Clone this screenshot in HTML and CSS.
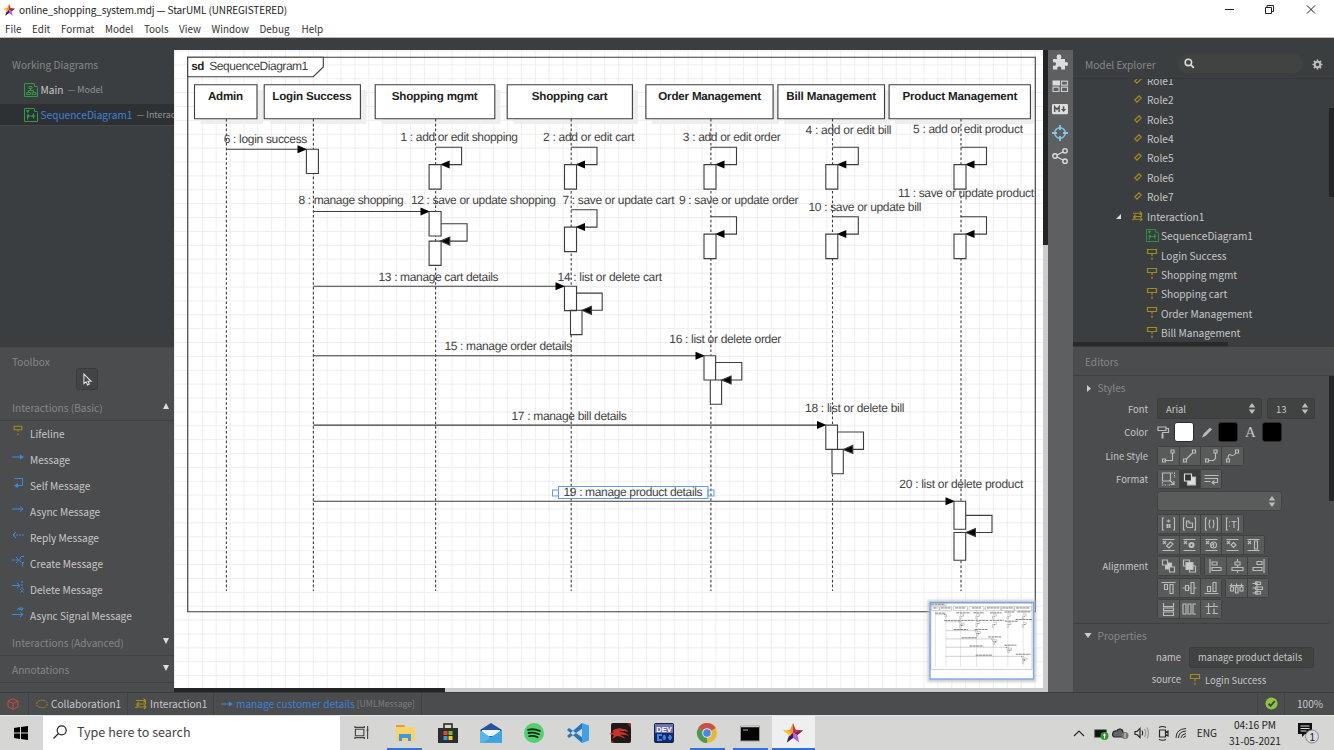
FILE: index.html
```html
<!DOCTYPE html>
<html lang="en">
<head>
<meta charset="utf-8">
<title>online_shopping_system.mdj — StarUML (UNREGISTERED)</title>
<link rel="stylesheet" href="styles.css">
</head>
<body>
<svg class="defs" width="0" height="0" aria-hidden="true">
  <symbol id="star" viewBox="0 0 20 20"><path d="M10 0 7.3 6.8 0 7.3 5.6 12 3.8 19.4 10 15Z" fill="#f6c143"/><path d="M10 0v15L7 9 5 7.3l2.3-.5Z" fill="#f3962f"/><path d="M10 0l2.7 6.800 7.300.5-5.600 4.700L10 10Z" fill="#c33350"/><path d="M14.400 12 20 7.300l-8 2.700Z" fill="#6b2745"/><path d="M10 15l6.200 4.400L14.400 12 10 10Z" fill="#b05fe0"/><path d="M10 10 5.600 14 3.800 19.400 10 15Z" fill="#2b1d66"/></symbol>
  <symbol id="lifeline" viewBox="0 0 12 14"><path d="M1.500 1.500h9v4h-9zM6 5.500V8M6 9.500v2.500" fill="none" stroke="#a48a1c" stroke-width="1.200"/></symbol>
  <symbol id="msg" viewBox="0 0 12 12"><path d="M0 6h10" stroke="#3a8ae0"/><path d="M8 3.500 12 6 8 8.500z" fill="#3a8ae0"/></symbol>
  <symbol id="self" viewBox="0 0 12 12"><path d="M2.500 1.500h8v7H5" fill="none" stroke="#3a8ae0"/><path d="M6 6 2 8.500 6 11z" fill="#3a8ae0"/></symbol>
  <symbol id="async" viewBox="0 0 12 12"><path d="M0 6h11M8 3.500 11 6 8 8.500" fill="none" stroke="#3a8ae0"/></symbol>
  <symbol id="reply" viewBox="0 0 12 12"><path d="M4 3 1 6l3 3" fill="none" stroke="#3a8ae0"/><path d="M1 6h11" stroke="#3a8ae0" stroke-dasharray="2 1"/></symbol>
  <symbol id="create" viewBox="0 0 12 12"><path d="M0 5h7M4 2l3 3-3 3M12 1.500H9L7.500 5 9 7.500h3M10.500 8v4" fill="none" stroke="#3a8ae0" stroke-dasharray="3 .5"/></symbol>
  <symbol id="delete" viewBox="0 0 12 12"><path d="M0 4.500h8M5 2l3 2.500L5 7" fill="none" stroke="#3a8ae0"/><path d="M10 0v8M8 8l4 4m0-4-4 4" fill="none" stroke="#3a8ae0" stroke-dasharray="2 1"/></symbol>
  <symbol id="signal" viewBox="0 0 12 12"><path d="M0 7.500h11M8 5l3 2.500L8 10M5 3.500 7 1h4L9.500 3.500M7 2.500h4" fill="none" stroke="#3a8ae0"/></symbol>
  <symbol id="seq" viewBox="0 0 14 14"><path d="M10 .5H.5v13h13v-9M10.500.5v3h3M3.500 2v2m0 2.500v5M4 8h5M9.500 5.500v5" fill="none" stroke="#2f9a47"/><path d="M2 2h3.500L3.700 5.500zM5 6v4L2.500 8zM8.500 6.500v3L11.500 8z" fill="#2f9a47"/></symbol>
  <symbol id="cls" viewBox="0 0 14 14"><path d="M10 .5H.5v13h13v-9M10.500.5v3h3M5 3.500h3v2H5zM6.500 5.500v2M4.500 9.500v-2h5v2M2.500 9.500h4v2h-4zM8 9.500h4v2H8z" fill="none" stroke="#2f9a47"/></symbol>
  <symbol id="role" viewBox="0 0 8 8"><path d="M.8 5 5 .8 7.200 3 3 7.200Z" fill="none" stroke="#a48a1c" stroke-width="1.200"/></symbol>
  <symbol id="inter" viewBox="0 0 12 12"><path d="M1 2.500h9.500M8.500.5l2 2-2 2M10.500 3v3H2M4 4 2 6l2 2M2 6v3h9M9 7l2 2-2 2M0 9.500h2" fill="none" stroke="#a48a1c" stroke-width="1.100"/></symbol>
  <symbol id="fmt" viewBox="0 0 14 14"><path d="M2.500 1 1 1v12h1.500M11.500 1H13v12h-1.500" fill="none" stroke="currentColor"/></symbol>
  <symbol id="bars" viewBox="0 0 14 14"><path d="M1 1.500h12M1 12.500h12M1.500 3l3 3m0-3-3 3" fill="none" stroke="currentColor"/></symbol>
  <symbol id="updown" viewBox="0 0 8 12"><path d="M.5 5 4 0l3.500 5zM.5 7 4 12l3.500-5z" fill="#bcbcbc"/></symbol>
</svg>

<header class="titlebar">
  <svg class="app-icon"><use href="#star"/></svg>
  <h1>online_shopping_system.mdj — StarUML (UNREGISTERED)</h1>
  <svg class="window-controls" viewBox="0 0 92 12"><path d="M1 5.500h9M41.500 3.500h6v6h-6zM43 3V1.500h6.500v6H48M83 1.500l8 8m0-8-8 8" fill="none" stroke="#222"/></svg>
</header>
<nav class="menubar"><span>File</span><span>Edit</span><span>Format</span><span>Model</span><span>Tools</span><span>View</span><span>Window</span><span>Debug</span><span>Help</span></nav>

<main class="workspace">
  <aside class="left">
    <section class="working">
      <h2>Working Diagrams</h2>
      <div class="doc"><svg><use href="#cls"/></svg><b>Main</b><small>— Model</small></div>
      <div class="doc selected"><svg><use href="#seq"/></svg><b>SequenceDiagram1</b><small>— Interaction1</small></div>
    </section>
    <section class="toolbox">
      <h2>Toolbox</h2>
      <div class="pointer"><svg viewBox="0 0 10 14"><path d="M1 1v10.500l2.500-2L5 13l2-1-1.500-3H9z" fill="none" stroke="#ddd" stroke-width="1.200"/></svg></div>
      <h3 class="basic">Interactions (Basic)<i class="tri up"></i></h3>
      <ul>
        <li><svg><use href="#lifeline"/></svg>Lifeline</li>
        <li><svg><use href="#msg"/></svg>Message</li>
        <li><svg><use href="#self"/></svg>Self Message</li>
        <li><svg><use href="#async"/></svg>Async Message</li>
        <li><svg><use href="#reply"/></svg>Reply Message</li>
        <li><svg><use href="#create"/></svg>Create Message</li>
        <li><svg><use href="#delete"/></svg>Delete Message</li>
        <li><svg><use href="#signal"/></svg>Async Signal Message</li>
      </ul>
      <h3>Interactions (Advanced)<i class="tri down"></i></h3>
      <h3>Annotations<i class="tri down"></i></h3>
    </section>
  </aside>

  <section class="canvas-area">
    <div class="canvas">
      <svg viewBox="174 50 869 638" width="869" height="638">
        <defs>
          <pattern id="grid" x="187.900" y="50.500" width="13.880" height="13.880" patternUnits="userSpaceOnUse"><path d="M0 .5H13.880M.5 0V13.880" stroke="#eee" fill="none"/></pattern>
          <g id="loop"><path d="M0 0H26V17.300H12" fill="none"/><path d="M4.500 17.300l9.500-4v8z" fill="#000" stroke="none"/><path d="M-6.500 17.300h12v24.500h-12z"/></g>
          <g id="loop2"><path d="M-6.500-12.300h12v24.500h-12z"/><path d="M5.500 0H31.500V17.300H12" fill="none"/></g>
          <path id="head" d="M0 0l-9.500-4v8z" fill="#000" stroke="none"/>
        </defs>
        <rect x="174" y="50" width="869" height="638" fill="#fff"/>
        <rect x="174" y="50" width="869" height="638" fill="url(#grid)"/>
        <g id="shapes" class="shapes">
          <path d="M187.700 57.300H1035.300V611.700H187.700Z" fill="none"/>
          <path d="M187.700 57.300H323.300V67L313.300 76.700H187.700Z"/>
          <path class="shadow" d="M200.500 90h62.500v34h-62.500zM270.200 90h96.200v34h-96.200zM381.200 90H500.500v34H381.200zM513.500 90H638v34H513.500zM652 90H779v34H652zM784 90H890v34H784zM895 90H1034v34H895z"/>
          <path d="M194.500 84.700h62.500v34h-62.500zM264.200 84.700h96.200v34h-96.200zM375.200 84.700h119.600v34h-119.600zM507.200 84.700h125.200v34H507.200zM645.900 84.700h127.200v34H645.900zM777.900 84.700h106.600v34H777.900zM889.100 84.700h141.300v34H889.100z"/>
          <path class="dashed" d="M226.400 119V591M313.400 119V591M435.600 119V591M571.200 119V591M710.900 119V591M832.500 119V591M961 119V591"/>
          <path d="M306.400 149.200h12v24.300h-12z"/>
          <path d="M226.400 149.200H300M313.400 211.500H422M313.400 286.300H558M313.400 355.700H697M313.400 425.100H819M313.400 501.300H947"/>
          <use href="#head" x="307" y="149.200"/><use href="#head" x="430" y="211.500"/><use href="#head" x="565" y="286.300"/><use href="#head" x="705" y="355.700"/><use href="#head" x="826.500" y="425.100"/><use href="#head" x="955" y="501.300"/>
          <use href="#loop" x="435.600" y="147.300"/><use href="#loop" x="571" y="147.300"/><use href="#loop" x="710.500" y="147.300"/><use href="#loop" x="832.300" y="147.300"/><use href="#loop" x="960.500" y="147.300"/>
          <use href="#loop" x="571" y="209.800"/><use href="#loop" x="710.500" y="216.800"/><use href="#loop" x="832.300" y="216.800"/><use href="#loop" x="960.500" y="216.800"/>
          <use href="#loop2" x="435.600" y="223.800"/><path d="M429.100 241.100h12v24.300h-12z"/><path d="M440.300 241.100l9.500-4v8z" fill="#000"/>
          <path d="M564.500 286.300h12v24.300h-12zM570.500 310.300h11.500v24.300h-11.500z"/><path d="M582 310.300l9.500-4v8z" fill="#000"/>
          <path d="M576.500 293.100H602.200V310.300H590" fill="none"/>
          <path d="M704 355.700h11.600v24.300H704zM710.300 380h11.300v24.300h-11.300z"/><path d="M715.600 362.500H741.800V380H730" fill="none"/><path d="M721.600 380l9.500-4v8z" fill="#000"/>
          <path d="M825.800 425.100h11.700v24.300h-11.700zM832 449.400h11.300v24.300H832z"/><path d="M837.500 432H863.500V449.400H852" fill="none"/><path d="M843.300 449.400l9.500-4v8z" fill="#000"/>
          <path d="M954 501.300h11.700v28H954zM954 532.500h11.700v27.800H954z"/><path d="M965.700 515.400H992V532.500H975" fill="none"/><path d="M965.900 532.500l9.500-4v8z" fill="#000"/>
        </g>
        <g class="sel"><rect x="558.500" y="486.500" width="149.500" height="12"/><rect x="552.500" y="490" width="6" height="6"/><rect x="708" y="490" width="6" height="6"/></g>
        <g class="names">
          <text x="191.300" y="69.700" textLength="13">sd</text>
          <text x="208" y="99.700" textLength="35">Admin</text>
          <text x="272.300" y="99.700" textLength="79.500">Login Success</text>
          <text x="391.700" y="99.700" textLength="86">Shopping mgmt</text>
          <text x="531.700" y="99.700" textLength="76">Shopping cart</text>
          <text x="658.300" y="99.700" textLength="102.700">Order Management</text>
          <text x="786.300" y="99.700" textLength="89.700">Bill Management</text>
          <text x="902.500" y="99.700" textLength="114.800">Product Management</text>
        </g>
        <g class="labels">
          <text x="209.300" y="69.700" textLength="99">SequenceDiagram1</text>
          <text x="223.700" y="143.300" textLength="83.600">6 : login success</text>
          <text x="400.500" y="141.300" textLength="117.500">1 : add or edit shopping</text>
          <text x="543" y="141.300" textLength="91.300">2 : add or edit cart</text>
          <text x="682.800" y="141.300" textLength="98">3 : add or edit order</text>
          <text x="805.500" y="134.300" textLength="86">4 : add or edit bill</text>
          <text x="913" y="133" textLength="110">5 : add or edit product</text>
          <text x="298.500" y="203.700" textLength="105.300">8 : manage shopping</text>
          <text x="411" y="204.300" textLength="145">12 : save or update shopping</text>
          <text x="562.500" y="204.300" textLength="112">7 : save or update cart</text>
          <text x="679" y="204.300" textLength="119.600">9 : save or update order</text>
          <text x="898" y="196.700" textLength="136">11 : save or update product</text>
          <text x="808.500" y="211.300" textLength="113">10 : save or update bill</text>
          <text x="378.500" y="281" textLength="120">13 : manage cart details</text>
          <text x="557.500" y="281" textLength="104.500">14 : list or delete cart</text>
          <text x="669.300" y="342.500" textLength="112">16 : list or delete order</text>
          <text x="444.500" y="350.300" textLength="127.500">15 : manage order details</text>
          <text x="805" y="412" textLength="99.500">18 : list or delete bill</text>
          <text x="511.500" y="419.500" textLength="115.300">17 : manage bill details</text>
          <text x="563.500" y="496" textLength="139">19 : manage product details</text>
          <text x="899.300" y="488.300" textLength="124">20 : list or delete product</text>
        </g>
        <!-- overview map -->
        <rect class="map-glow" x="927.500" y="600" width="108.500" height="82"/>
        <rect class="map" x="930" y="602.500" width="103.500" height="76.500"/>
        <g class="map-view" transform="translate(908.500 596.500) scale(.1193)"><use href="#shapes"/>
          <path class="map-text" d="M191 65h117M208 96h35M272 96h80M392 96h86M532 96h76M658 96h103M786 96h90M902 96h115M224 139h83M400 137h118M543 137h91M683 137h98M806 130h86M913 129h110M298 200h106M411 200h145M562 200h112M679 200h120M898 193h136M808 207h113M378 277h120M557 277h105M669 339h112M444 346h128M805 408h100M511 415h116M563 492h139M899 484h124"/></g>
      </svg>
    </div>
    <div class="vscroll"><i></i></div>
    <div class="hscroll"><i></i></div>
  </section>

  <aside class="extensions">
    <svg viewBox="0 0 16 16"><path d="M1 5h4.300C3.800 2.500 5 .5 7 .5s3.200 2 1.700 4.500H13v3.500c2-1 3-.2 3 1.500s-1 2.500-3 1.500V15.500H9c.8-2 0-3-1.700-3s-2.500 1-1.800 3H1v-4c2 .6 3-.2 3-1.600S3 8 1 8.600z" fill="#ddd"/></svg>
    <svg viewBox="0 0 16 16"><path d="M.5 2.500H8v5H.5z" fill="#ddd"/><path d="M9.500 3.100h6v4h-6zM1 9.100h6v4.400H1zM9.500 9.100h6v4.400h-6z" fill="none" stroke="#ccc" stroke-width="1.200"/></svg>
    <svg viewBox="0 0 18 16"><rect y="2.500" width="18" height="11.500" rx="1.500" fill="#ddd"/><path d="M3 11.500V5.500l2.500 3 2.500-3v6M13 5v4" fill="none" stroke="#555" stroke-width="1.700"/><path d="M10 8h6l-3 3.500z" fill="#555"/></svg>
    <svg viewBox="0 0 16 16"><circle cx="8" cy="8" r="5.300" fill="none" stroke="#86c5ea" stroke-width="1.500"/><path d="M8 0v5M8 11v5M0 8h5M11 8h5" stroke="#86c5ea" stroke-width="1.800"/></svg>
    <svg viewBox="0 0 16 16"><path d="M3 8 13 3M3 8l10 5" stroke="#ddd" stroke-width="1.300"/><g fill="#5e5f61" stroke="#ddd" stroke-width="1.400"><circle cx="3" cy="8" r="2.200"/><circle cx="13" cy="2.800" r="2.200"/><circle cx="13" cy="13.200" r="2.200"/></g></svg>
  </aside>

  <aside class="right">
    <section class="explorer">
      <div class="explorer-head"><h2>Model Explorer</h2>
        <div class="search"><svg viewBox="0 0 12 12"><circle cx="4.800" cy="4.800" r="3.500" fill="none" stroke="#ddd" stroke-width="1.700"/><path d="M7.500 7.500l3.200 3.200" stroke="#ddd" stroke-width="2"/></svg></div>
        <svg class="gear" viewBox="0 0 12 12"><circle cx="6" cy="6" r="3" fill="none" stroke="#bbb" stroke-width="2.200"/><path d="M6 .5v2M6 9.500v2M.5 6h2M9.500 6h2M2.100 2.100l1.500 1.500M8.400 8.400l1.500 1.500M9.900 2.100 8.400 3.600M3.600 8.400 2.100 9.900" stroke="#bbb" stroke-width="1.800"/></svg>
      </div>
      <div class="tree">
        <div class="role"><svg><use href="#role"/></svg>Role1</div>
        <div class="role"><svg><use href="#role"/></svg>Role2</div>
        <div class="role"><svg><use href="#role"/></svg>Role3</div>
        <div class="role"><svg><use href="#role"/></svg>Role4</div>
        <div class="role"><svg><use href="#role"/></svg>Role5</div>
        <div class="role"><svg><use href="#role"/></svg>Role6</div>
        <div class="role"><svg><use href="#role"/></svg>Role7</div>
        <div class="interaction"><svg class="expander" viewBox="0 0 6 6"><path d="M6 0v6H0z" fill="#ddd"/></svg><svg class="ico"><use href="#inter"/></svg>Interaction1</div>
        <div class="leaf seq"><svg><use href="#seq"/></svg>SequenceDiagram1</div>
        <div class="leaf"><svg><use href="#lifeline"/></svg>Login Success</div>
        <div class="leaf"><svg><use href="#lifeline"/></svg>Shopping mgmt</div>
        <div class="leaf"><svg><use href="#lifeline"/></svg>Shopping cart</div>
        <div class="leaf"><svg><use href="#lifeline"/></svg>Order Management</div>
        <div class="leaf"><svg><use href="#lifeline"/></svg>Bill Management</div>
        <i class="tree-v"></i><i class="tree-h"></i>
      </div>
    </section>
    <section class="editors">
      <h2>Editors</h2>
      <div class="editor-body">
        <h3><svg viewBox="0 0 4 7"><path d="M0 0l4 3.500L0 7z" fill="#ccc"/></svg>Styles</h3>
        <div class="field"><label>Font</label><div class="select font">Arial<svg><use href="#updown"/></svg></div><div class="select size">13<svg><use href="#updown"/></svg></div></div>
        <div class="field colors"><label>Color</label>
          <svg viewBox="0 0 12 14"><path d="M1 2h8v3.500H1zM9 3.500h2.500v4h-6V9" fill="none" stroke="#bbb" stroke-width="1.200"/><path d="M4.500 8.500h2v5h-2z" fill="#bbb"/></svg><i class="swatch white"></i>
          <svg viewBox="0 0 12 14"><path d="M1 12.500 2.500 9 9 2.500l2 2L4.500 11z" fill="#bbb"/></svg><i class="swatch"></i>
          <span class="letter">A</span><i class="swatch"></i></div>
        <div class="field"><label>Line Style</label><div class="group">
          <span><svg viewBox="0 0 14 14"><path d="M3 11.500h8V4M1 10h3v3H1zM9.500 1h3v3h-3z"/></svg></span><span><svg viewBox="0 0 14 14"><path d="M3.500 10.500l7-7M1 10h3v3H1zM10 1h3v3h-3z"/></svg></span><span><svg viewBox="0 0 14 14"><path d="M4 11.500h5l2-2V4M1 10h3v3H1zM9.500 1h3v3h-3z"/></svg></span><span><svg viewBox="0 0 14 14"><path d="M2.500 10c0-4 1-5 3-4s3 1 5-2M1 10h3v3H1zM10 1h3v3h-3z"/></svg></span></div></div>
        <div class="field"><label>Format</label><div class="group">
          <span><svg viewBox="0 0 14 14"><path d="M1 1h8v8H1z"/><path d="M10 1h3v5M1 10v3h5M7 13h2" stroke-dasharray="1.500 1"/><path d="M8 8l4 4M12.500 9v3.500H9"/></svg></span><span class="on"><svg viewBox="0 0 14 14"><path d="M5 5h8v8H5z" fill="#ddd"/><path d="M2 2h7v7H2z" fill="#333" stroke="#ddd"/></svg></span><span><svg viewBox="0 0 14 14"><path d="M0 3.500h14M0 6.500h13v4H8M0 9.500h6M10 8.500l-2.500 2 2.500 2"/></svg></span></div></div>
        <div class="field wide"><div class="select blank"><svg><use href="#updown"/></svg></div></div>
        <div class="field g1"><div class="group">
          <span><svg viewBox="0 0 14 14"><use href="#fmt"/><path d="M5 4h4M7 2.500v3M4.500 8h5M4.500 10h5M6 7v4M8 7v4"/></svg></span><span><svg viewBox="0 0 14 14"><use href="#fmt"/><path d="M4 10V4h2.500v2H10v4.500H4.500"/></svg></span><span><svg viewBox="0 0 14 14"><use href="#fmt"/><path d="M6 3Q4.500 3 5 5 5 7 4 7q1 0 1 2 0 2 1 2M8 3q1.500 0 1 2 0 2 1 2-1 0-1 2 0 2-1 2"/></svg></span><span><svg viewBox="0 0 14 14"><use href="#fmt"/><path d="M4 4.500v1M4 8.500v1M6 4.500h5M8.500 4.500V11"/></svg></span></div></div>
        <div class="field g2"><div class="group">
          <span><svg viewBox="0 0 14 14"><use href="#bars"/><path d="M5 8 9 4l2.500 2L7.500 10z"/></svg></span><span><svg viewBox="0 0 14 14"><use href="#bars"/><circle cx="9" cy="7" r="2" stroke-width="2.200"/></svg></span><span><svg viewBox="0 0 14 14"><use href="#bars"/><circle cx="9" cy="7" r="3"/><path d="M8 6q2-1 1 1v2M6.500 8 9 5"/></svg></span><span><svg viewBox="0 0 14 14"><use href="#bars"/><path d="M8 4.500 10.500 7 8 9.500 5.500 7z"/></svg></span><span><svg viewBox="0 0 14 14"><use href="#bars"/><path d="M8 3h3v8H8z"/></svg></span></div></div>
        <div class="field g3"><label>Alignment</label><div class="group">
          <span><svg viewBox="0 0 14 14"><path d="M4 4h6v6H4z" fill="#ccc"/><path d="M1 1h5v5H1zM8 8h5v5H8z" fill="#555757"/></svg></span><span><svg viewBox="0 0 14 14"><path d="M1 1h6v6H1zM7 7h6v6H7z"/><path d="M3.500 3.500h7v7h-7z" fill="#ccc"/></svg></span></div><div class="group">
          <span><svg viewBox="0 0 14 14"><path d="M1.500 0v14M3.500 3h5v3h-5zM3.500 8.500h9v3h-9z"/></svg></span><span><svg viewBox="0 0 14 14"><path d="M7 0v3M7 6v2.500M7 11.500V14M4.500 3h5v3h-5zM1.500 8.500h11v3h-11z"/></svg></span><span><svg viewBox="0 0 14 14"><path d="M12.500 0v14M5.500 2.500h5v3h-5zM1.500 8.500h9v3h-9z"/></svg></span></div></div>
        <div class="field g4"><div class="group">
          <span><svg viewBox="0 0 14 14"><path d="M0 1.500h14M3 3.500h3v5H3zM8.500 3.500h3v9h-3z"/></svg></span><span><svg viewBox="0 0 14 14"><path d="M0 7h3M6 7h2.500M11.500 7H14M3 4.500h3v5H3zM8.500 1.500h3v11h-3z"/></svg></span><span><svg viewBox="0 0 14 14"><path d="M0 12.500h14M3 5.500h3v5H3zM8.500 1.500h3v9h-3z"/></svg></span></div><div class="group">
          <span><svg viewBox="0 0 14 14"><path d="M0 4.500h14M1 6h3v4H1zM6 6h2.500v6H6zM10.500 6h3v4h-3zM2 2.500v4M7 2.500v4M12 2.500v4"/></svg></span><span><svg viewBox="0 0 14 14"><path d="M5.500 0v14M4 1h5v2.500H4zM4 6h7v2.500H4zM4 10.500h5V13H4zM1 2.500h4M1 7h3M1 12h3"/></svg></span></div></div>
        <div class="field g5"><div class="group">
          <span><svg viewBox="0 0 14 14"><path d="M2 1v3.500h10V1M2 6h10v2.500H2zM2 13.500V10h10v3.500z"/></svg></span><span><svg viewBox="0 0 14 14"><path d="M.5 2h3v10h-3zM5.500 2h3v10h-3zM13.500 2h-3v10h3"/></svg></span><span><svg viewBox="0 0 14 14"><path d="M4 1v10.500M1 4.500h12.500M9.500 1v3M9.500 6.500v5M2 11.500h4M8 11.500h5.500" /></svg></span></div></div>
        <h3 class="props"><svg viewBox="0 0 7 5"><path d="M0 0h7L3.500 5z" fill="#ccc"/></svg>Properties</h3>
        <div class="prop"><label>name</label><div class="input">manage product details</div></div>
        <div class="prop source"><label>source</label><svg><use href="#lifeline"/></svg>Login Success</div>
        <i class="editor-scroll"></i>
      </div>
    </section>
  </aside>
</main>

<footer class="status">
  <div class="cube"><svg viewBox="0 0 12 12"><path d="M6 .7 11 3v6L6 11.300 1 9V3zM1 3l5 2.500L11 3M6 5.500v5.800" fill="none" stroke="#c74a40"/></svg></div>
  <div class="crumb c1"><svg viewBox="0 0 12 10"><ellipse cx="6" cy="5" rx="5.300" ry="3.800" fill="none" stroke="#a48a1c" stroke-dasharray="2 .8"/></svg>Collaboration1</div>
  <div class="crumb c2"><svg><use href="#inter"/></svg>Interaction1</div>
  <div class="crumb c3"><svg><use href="#msg"/></svg><em>manage customer details</em><small>[UMLMessage]</small></div>
  <div class="ok"><svg viewBox="0 0 14 14"><circle cx="7" cy="7" r="6.500" fill="#8cc542"/><path d="M3.800 7.300 6 9.500l4.500-5" fill="none" stroke="#444" stroke-width="2"/></svg></div>
  <div class="zoom">100%</div>
</footer>

<footer class="taskbar">
  <div class="start"><svg viewBox="0 0 14 14"><path d="M0 2l6-.9v5.500H0zM7 1l7-1v6.600H7zM0 7.500h6V13l-6-.9zM7 7.500h7V14l-7-1z"/></svg></div>
  <div class="find"><svg viewBox="0 0 14 14"><circle cx="8.700" cy="5.300" r="4.500" fill="none" stroke="#222" stroke-width="1.200"/><path d="M5.500 8.500.5 13.500" stroke="#222" stroke-width="1.300"/></svg>Type here to search</div>
  <div class="apps">
    <span><svg class="sm" viewBox="0 0 16 16"><path d="M1.500 4.500h9v7h-9zM1 1v1.500h10V1M1 15v-1.500h10V15M14.500 1v14M13.500 5.500h2" fill="none" stroke="#444" stroke-width="1.200"/></svg></span>
    <span class="run"><svg viewBox="0 0 20 20"><path d="M1 2h8l1 2h10v14H1z" fill="#f8d36a"/><path d="M1 2h8l1 2H1z" fill="#d9a233"/><path d="M4 18v-7h12v7h-3v-3H7v3z" fill="#4a94d8"/></svg></span>
    <span><svg viewBox="0 0 20 20"><path d="M6 5V1h8v4" fill="none" stroke="#222" stroke-width="1.500"/><path d="M0 5h20v15H0z" fill="#2e2e2e"/><path d="M5.500 8h4v4h-4z" fill="#e8492e"/><path d="M10.500 8h4v4h-4z" fill="#7db928"/><path d="M5.500 13h4v4h-4z" fill="#2b9fe0"/><path d="M10.500 13h4v4h-4z" fill="#f6c52b"/></svg></span>
    <span><svg class="wide" viewBox="0 0 22 20"><path d="M0 7 11 0l11 7v12.500H0z" fill="#2455a4"/><path d="M2 7h18v6H2z" fill="#eef4fb"/><path d="M0 7l11 7.500L22 7v12.500H0z" fill="#58b7ea"/><path d="M22 7v12.500H3z" fill="#3ea4e0"/></svg></span>
    <span><svg viewBox="0 0 20 20"><circle cx="10" cy="10" r="10" fill="#51d06f"/><path d="M4 6.800q6-1.500 12 1.200M4.600 10q5.500-1.300 10.400 1.200M5.200 13.200q4.500-1 8.500 1" fill="none" stroke="#1a2a1d" stroke-width="1.800" stroke-linecap="round"/></svg></span>
    <span><svg class="wide" viewBox="0 0 22 20"><path d="M16 5 2 15 0 13 15 0zM16 15 2 5 0 7 15 20z" fill="#2577b9"/><path d="M15 0l7 2.500v15L15 20z" fill="#3fa0e6"/></svg></span>
    <span><svg viewBox="0 0 20 20"><rect width="20" height="20" rx="2" fill="#211818"/><path d="M1 8q5-4 11-2 4 0 5 3-5-2-9 0 7 0 10 4-5-2-9-1 4 1 5 4-4-3-8-3l-5 3 2-4-5-1 5-2z" fill="#c93228"/><path d="M16 0h2q2 0 2 2v3zM0 17v1q0 2 2 2h2z" fill="#9c2320"/></svg></span>
    <span><svg viewBox="0 0 20 20"><rect x=".5" y=".5" width="19" height="19" rx="1" fill="#142a66" stroke="#18204a"/><path d="M1 1h18v9H1z" fill="#7072ad"/><text class="dev" x="10" y="8.500">DEV</text><path d="M8 12H4v5h4M12 14.500H8.500M10.300 12v5M18 14.500h-4M16 12v5" fill="none" stroke="#3d82ed" stroke-width="2"/></svg></span>
    <span class="run"><svg viewBox="0 0 20 20"><circle cx="10" cy="10" r="10" fill="#e3b93c"/><path d="M10 10 1.300 5A10 10 0 0 1 18.700 5z" fill="#cf4d42"/><path d="M10 10v10A10 10 0 0 1 1.300 5z" fill="#4a9a55"/><circle cx="10" cy="10" r="4.800" fill="#e6e6e6"/><circle cx="10" cy="10" r="3.800" fill="#4b86e8"/></svg></span>
    <span class="run"><svg viewBox="0 0 20 20"><path d="M.5 3h19v15H.5z" fill="#050505" stroke="#999"/><path d="M1 3.500h18" stroke="#ccc" stroke-width="1.500"/><path d="M3 7h5" stroke="#aaa"/></svg></span>
    <span class="run active"><svg><use href="#star"/></svg></span>
  </div>
  <div class="tray">
    <svg viewBox="0 0 114 18"><g fill="none" stroke="#2a2a2a" stroke-width="1.200"><path d="M1 12l5-5 5 5"/><path d="M22 6h11v7H22z" fill="#111"/><path d="M42 13h8c4 0 3-4.500 0-4.500 0-4-5-4.500-6-1.500-5-1-6 6-2 6z" fill="#666"/><path d="M62 7.500h2l3-3v9l-3-3h-2z"/><path d="M69 6.500q1.500 2.500 0 5"/><path d="M71.500 5q2.500 4 0 8M74 3.500q3 5.500 0 11" stroke="#999"/><path d="M86.500 6h6v7h-6zM92.500 8.500l2.500-1.500v5l-2.500-1.500M86 3.500q3.500-2 7 0M86 15.500q3.500 1.500 7 0"/><path d="M103 14q0-9 10-9.500M105.500 14q0-6.500 7.500-7M108 14q.5-4 5-4.500M110.500 14q.5-2 2.500-2" stroke-width="1"/></g><circle cx="31.500" cy="12" r="4" fill="#2b9a35"/><path d="M30 11h3M31.500 9.500v5" stroke="#fff"/><circle cx="52" cy="11.500" r="3.500" fill="#777"/><path d="M52 9v5" stroke="#ddd"/></svg>
    <span class="lang">ENG</span>
    <span class="clock">04:16 PM<br>31-05-2021</span>
    <svg class="note" viewBox="0 0 22 22"><path d="M0 1h14v11H7l-3 3v-3H0z" fill="#111"/><path d="M2.500 4h9M2.500 6.500h9M2.500 9h6" stroke="#ddd"/><circle cx="14" cy="14.500" r="6.500" fill="#d9d9d9" stroke="#888"/><text x="11.500" y="18.500">1</text></svg>
  </div>
</footer>
</body>
</html>
```

FILE: styles.css
```css
* { box-sizing: border-box; }
body { margin: 0; width: 1334px; height: 750px; overflow: hidden; display: grid; grid-template-rows: 20px 18px 654px 23px 35px; background: #fff; font: 10.150px/16px "Noto Sans CJK SC", "Noto Sans", sans-serif; color: #c6c7c8; }
svg { display: block; flex: none; overflow: visible; }
.defs { position: absolute; }
h1, h2, h3, ul { margin: 0; padding: 0; font-weight: 400; }
ul { list-style: none; }
i, em { font-style: normal; }

.titlebar { display: flex; align-items: center; padding: 0 18px 0 3px; color: #222; }
.app-icon { width: 12px; height: 12px; }
.titlebar h1 { font-size: 10px; letter-spacing: -.100px; margin-left: 4px; white-space: nowrap; }
.window-controls { width: 92px; height: 12px; margin-left: auto; }
.menubar { display: flex; gap: 10.600px; padding-left: 5px; border-bottom: 1px solid #b8babb; color: #333; font-size: 9.900px; line-height: 18px; }
.menubar span:last-child { margin-left: 1.500px; }

.workspace { display: grid; grid-template-columns: 174px 874px 25px 261px; background: #3b3e40; min-height: 0; }
h2, h3 { font-size: 10.150px; line-height: 16px; color: #85878a; }
.left { display: grid; grid-template: 309px 345px / minmax(0, 1fr); min-width: 0; overflow: hidden; }
.working { padding-top: 19px; }
.working h2 { padding-left: 12px; }
.doc { display: flex; align-items: center; height: 22px; padding-left: 24px; white-space: nowrap; overflow: hidden; }
.working h2 + .doc { margin-top: 5px; height: 24px; margin-bottom: 2px; }
.doc svg { width: 14px; height: 14px; margin-right: 2.500px; }
.doc b { font-weight: 400; }
.doc small { font-size: 8.900px; color: #929496; margin-left: 4px; }
.doc.selected { background: #2e3133; border-bottom: 1px solid #45484a; }
.doc.selected b { color: #3e80d8; }
.toolbox { background: #4b4c4e; padding-top: 6px; border-top: 1px solid #454648; }
.toolbox h2 { padding-left: 12px; height: 14px; }
.pointer { width: 22px; height: 22px; margin-left: 76px; border: 1px solid #3a3b3c; border-radius: 3px; background: #434445; display: grid; place-items: center; }
.pointer svg { width: 9px; height: 13px; }
.toolbox h3 { height: 27px; padding: 6px 5px 0 12px; display: flex; justify-content: space-between; border-bottom: 1px solid #414244; }
.toolbox h3.basic { height: 31px; padding-top: 10px; }
.tri { border: 3.500px solid transparent; width: 0; height: 0; }
.tri.up { border-bottom: 6px solid #ddd; border-top: 0; margin-top: 3px; }
.tri.down { border-top: 6px solid #ddd; border-bottom: 0; margin-top: 3px; }
.toolbox ul { height: 208px; }
.toolbox li { display: flex; align-items: center; height: 26px; padding-left: 12px; }
.toolbox li svg { width: 12px; height: 12px; margin: 0 6px 6px 0; }

.canvas-area { display: grid; grid-template: 638px 4px / 869px 5px; padding-top: 12px; }
.canvas { background: #fff; }
.shapes { fill: #fff; stroke: #3c3c3c; stroke-width: var(--line, 1.100px); }
.shapes .shadow { fill: #eee; stroke: none; }
.shapes .dashed { stroke-dasharray: 2.600 2.200; fill: none; }
.names, .labels { font-family: "Liberation Sans", Arial, sans-serif; font-size: 12px; text-rendering: geometricPrecision; }
.names { font-weight: 700; fill: #1c1c1c; font-size: 11.600px; }
.labels { fill: #444; }
.sel { fill: none; stroke: #629be8; }
.map-glow { fill: #b9bcc0; opacity: .75; filter: blur(1.500px); }
.map { fill: #fff; stroke: #73a7ef; stroke-width: 1.300; }
.map-view { --line: 2.500px; opacity: .8; }
.map-text { fill: none; stroke: #444; stroke-width: 7; stroke-dasharray: 24 4; }
.vscroll { background: #cbcccd; grid-row: 1; grid-column: 2; }
.vscroll i { display: block; height: 195px; background: #232425; }
.hscroll { background: #cbcccd; grid-row: 2; grid-column: 1 / 3; }
.hscroll i { display: block; height: 4px; width: 271px; background: #232425; }

.extensions { margin-top: 12px; background: #5e5f61; display: flex; flex-direction: column; gap: 7.500px; align-items: center; padding: 4px 1px 0 0; }
.extensions svg { width: 16px; height: 16px; }

.right { display: grid; grid-template: 309px 345px / minmax(0, 1fr); min-width: 0; overflow: hidden; }
.explorer-head { height: 41px; display: flex; padding: 16px 11px 0 12px; border-bottom: 1px solid #36393b; }
.explorer-head h2 { padding-top: 3px; width: 93px; }
.search { width: 125px; height: 19px; border-radius: 10px; background: #414342; padding: 4px 6px; }
.search svg { width: 11px; height: 11px; }
.gear { width: 11px; height: 11px; margin: 5px 0 0 auto; }
.tree { position: relative; height: 268px; overflow: hidden; }
.tree div { height: 19.430px; display: flex; align-items: center; white-space: nowrap; }
.tree div:first-child { margin-top: -8px; }
.tree svg { width: 12px; height: 14px; margin: 0 3px 1px 0; }
.tree .role { padding-left: 61px; }
.tree .role svg { width: 8px; height: 8px; margin: 0 5px 2px 0; }
.tree .interaction { padding-left: 43px; }
.tree .expander { width: 5px; height: 5px; margin-right: 11px; }
.tree .ico { width: 11px; height: 11px; margin: 0 4px 1px 0; }
.tree .leaf { padding-left: 73px; }
.tree .seq svg { width: 13px; height: 13px; margin-right: 2px; }
.tree-v { position: absolute; right: 0; top: 29px; width: 5px; height: 89px; background: #242526; }
.tree-h { position: absolute; left: 0; bottom: 1px; width: 155px; height: 4px; background: #292a2b; }
.editors { background: #4b4c4e; min-height: 0; overflow: hidden; }
.editors h2 { height: 29px; padding: 7px 0 0 12px; border-bottom: 1px solid #3f4042; }
.editor-body { position: relative; padding-top: 4px; font-size: 9.450px; }
.editor-body h3 { display: flex; align-items: center; padding-left: 14px; }
.editor-body h3 svg { width: 4px; height: 7px; margin-right: 6.500px; }
.field { display: flex; height: 23.500px; align-items: center; padding-left: 84px; }
.field label { width: 75px; margin: 0 9px 0 -84px; text-align: right; flex: none; }
h3 + .field { margin-top: 1px; }
.select { height: 21px; border: 1px solid #3b3c3d; border-radius: 3px; background: #414242; padding: 0 5px 0 8px; display: flex; align-items: center; justify-content: space-between; }
.select svg { width: 8px; height: 11px; }
.select.font { width: 105px; margin-right: 5px; }
.select.size { width: 48px; }
.select.blank { width: 125px; height: 20px; justify-content: flex-end; background: #5a5b5b; border-color: #424344; }
.colors svg { width: 12px; height: 14px; margin-right: 5px; }
.swatch { width: 20px; height: 20px; border-radius: 3px; border: 1px solid #2d2d2d; background: #000; margin-right: 7px; }
.swatch.white { background: #fff; }
.letter { font: 15px/18px "Liberation Serif", serif; width: 12px; margin: 0 5px 0 0; }
.group { display: flex; border: 1px solid #404142; border-radius: 3px; margin-right: 3px; }
.group span { width: 21.300px; height: 18px; display: grid; place-items: center; background: #595a5a; border-left: 1px solid #404142; }
.group span:first-child { border-left: 0; width: 20.800px; }
.group .on { background: #3b3c3c; }
.group svg { width: 15px; height: 14px; fill: none; stroke: #bbb; color: #bbb; stroke-width: 1.150; }
.field.wide { height: 20px; }
.field.g1 { height: 21px; margin-top: 2px; }
.field.g2, .field.g4, .field.g5 { height: 21px; }
.field.g3 { height: 22px; }
.editor-body h3.props { border-top: 1px solid #3e3f40; margin: 4px 5px 0 0; height: 24px; padding-left: 11px; }
.editor-body h3.props svg { width: 8px; height: 5px; margin-right: 5.500px; }
.prop { display: flex; align-items: center; height: 20px; }
.prop label { width: 108px; margin: -1px 8px 0 0; text-align: right; }
.prop .input { width: 125px; height: 21px; line-height: 19px; border: 1px solid #3b3c3d; border-radius: 3px; background: #414242; padding-left: 8px; white-space: nowrap; }
.prop svg { width: 12px; height: 14px; margin: 0 4px 0 0; }
.source { height: 25px; }
.editor-scroll { position: absolute; right: 0; top: 0; width: 5px; height: 125px; background: #242526; }

.status { display: flex; background: #4b4c4e; border-top: 1px solid #3c3d3e; }
.status > div { display: flex; align-items: center; border-right: 1px solid #414244; white-space: nowrap; padding-bottom: 1px; }
.status .cube { width: 29px; padding-left: 7px; }
.status svg { width: 12px; height: 12px; }
.crumb { padding-left: 7px; }
.crumb svg { margin-right: 3px; }
.c1 { width: 99px; }
.c2 { width: 86px; }
.c3 { width: 208px; }
.c3 em { color: #3e80d8; }
.c3 small { font-size: 8.700px; color: #7d7e80; margin-left: 2px; }
.status .ok { margin-left: auto; width: 28px; border-left: 1px solid #414244; justify-content: center; }
.status .ok svg { width: 13px; height: 13px; }
.status .zoom { width: 49px; border: 0; padding-left: 12px; }

.taskbar { display: flex; background: #d6d6d5; border-top: 1px solid #e6e6e6; color: #222; }
.start { width: 43px; display: flex; align-items: center; padding-left: 14px; }
.start svg { width: 14px; height: 14px; }
.find { width: 297px; background: #fff; display: flex; align-items: center; font-size: 12.550px; color: #444; gap: 10px; padding: 0 0 2px 10px; }
.find svg { width: 14px; height: 14px; }
.apps { display: flex; }
.apps span { width: 43.200px; display: grid; place-items: center; position: relative; padding-bottom: 1px; }
.apps svg { width: 20px; height: 20px; }
.apps svg.sm { width: 15px; height: 15px; }
.apps svg.wide { width: 22px; }
.apps .run::after { content: ""; position: absolute; bottom: 0; left: 4px; right: 4px; height: 2px; background: #2f74d0; }
.apps .active { background: #efefef; }
.apps .active::after { left: 0; right: 0; }
.dev { font: 700 7.500px "Liberation Sans", sans-serif; fill: #fff; text-anchor: middle; }
.tray { margin-left: auto; display: flex; align-items: center; padding: 0 14px 1px 0; }
.tray svg { width: 114px; height: 18px; }
.lang { margin-left: 10px; }
.clock { width: 62px; margin-left: 7px; text-align: center; font-size: 10.150px; line-height: 16px; white-space: nowrap; }
.tray .note { width: 22px; height: 22px; margin-left: 12px; }
.note text { font: 10px "Liberation Sans", sans-serif; fill: #222; }
```
